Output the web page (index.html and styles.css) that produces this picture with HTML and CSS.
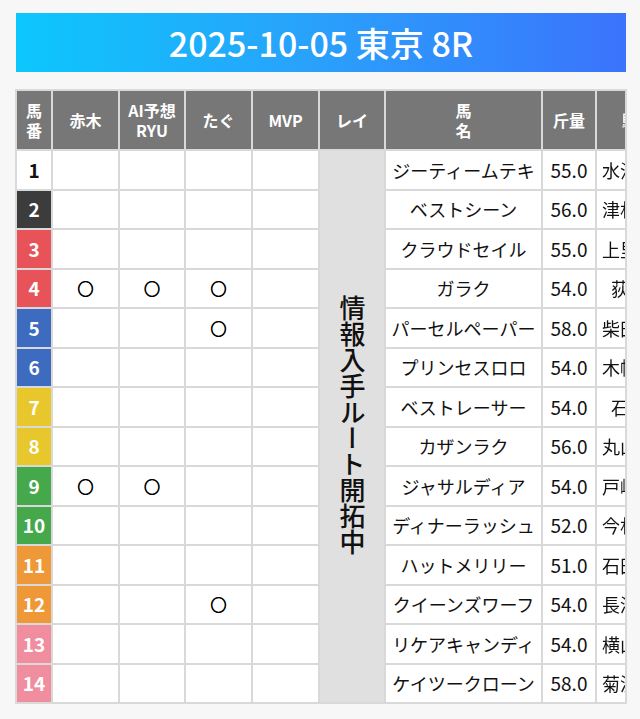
FILE: index.html
```html
<!DOCTYPE html>
<html lang="ja">
<head>
<meta charset="utf-8">
<title>2025-10-05 東京 8R</title>
<link rel="stylesheet" href="styles.css">
</head>
<body>
<main class="page">
  <h1 class="race-title">2025-10-05 東京 8R</h1>
  <div class="table-wrap">
    <table class="race-table">
      <colgroup>
        <col class="c-num"><col class="c-pick"><col class="c-pick2"><col class="c-pick"><col class="c-pick"><col class="c-pick2"><col class="c-name"><col class="c-wt"><col class="c-jockey">
      </colgroup>
      <thead>
        <tr>
          <th>馬<br>番</th>
          <th>赤木</th>
          <th>AI予想<br>RYU</th>
          <th>たぐ</th>
          <th>MVP</th>
          <th>レイ</th>
          <th>馬<br>名</th>
          <th>斤量</th>
          <th class="jk-head"><span class="peek peek-head">騎手</span></th>
        </tr>
      </thead>
      <tbody>
        <tr><td class="num w1">1</td><td></td><td></td><td></td><td></td><td class="rei" rowspan="14"><span class="rei-text">情報入手ルート開拓中</span></td><td class="name">ジーティームテキ</td><td class="wt">55.0</td><td class="jk"><span class="peek">水沼元輝</span></td></tr>
        <tr><td class="num w2">2</td><td></td><td></td><td></td><td></td><td class="name">ベストシーン</td><td class="wt">56.0</td><td class="jk"><span class="peek">津村明秀</span></td></tr>
        <tr><td class="num w3">3</td><td></td><td></td><td></td><td></td><td class="name">クラウドセイル</td><td class="wt">55.0</td><td class="jk"><span class="peek">上里直汰</span></td></tr>
        <tr><td class="num w3">4</td><td class="mk">○</td><td class="mk">○</td><td class="mk">○</td><td></td><td class="name">ガラク</td><td class="wt">54.0</td><td class="jk"><span class="peek">荻野極</span></td></tr>
        <tr><td class="num w5">5</td><td></td><td></td><td class="mk">○</td><td></td><td class="name">パーセルペーパー</td><td class="wt">58.0</td><td class="jk"><span class="peek">柴田大知</span></td></tr>
        <tr><td class="num w5">6</td><td></td><td></td><td></td><td></td><td class="name">プリンセスロロ</td><td class="wt">54.0</td><td class="jk"><span class="peek">木幡初也</span></td></tr>
        <tr><td class="num w7">7</td><td></td><td></td><td></td><td></td><td class="name">ベストレーサー</td><td class="wt">54.0</td><td class="jk"><span class="peek">石橋脩</span></td></tr>
        <tr><td class="num w7">8</td><td></td><td></td><td></td><td></td><td class="name">カザンラク</td><td class="wt">56.0</td><td class="jk"><span class="peek">丸山元気</span></td></tr>
        <tr><td class="num w9">9</td><td class="mk">○</td><td class="mk">○</td><td></td><td></td><td class="name">ジャサルディア</td><td class="wt">54.0</td><td class="jk"><span class="peek">戸崎圭太</span></td></tr>
        <tr><td class="num w9">10</td><td></td><td></td><td></td><td></td><td class="name">ディナーラッシュ</td><td class="wt">52.0</td><td class="jk"><span class="peek">今村聖奈</span></td></tr>
        <tr><td class="num w11">11</td><td></td><td></td><td></td><td></td><td class="name">ハットメリリー</td><td class="wt">51.0</td><td class="jk"><span class="peek">石田拓郎</span></td></tr>
        <tr><td class="num w11">12</td><td></td><td></td><td class="mk">○</td><td></td><td class="name">クイーンズワーフ</td><td class="wt">54.0</td><td class="jk"><span class="peek">長浜鴻緒</span></td></tr>
        <tr><td class="num w13">13</td><td></td><td></td><td></td><td></td><td class="name">リケアキャンディ</td><td class="wt">54.0</td><td class="jk"><span class="peek">横山琉人</span></td></tr>
        <tr><td class="num w13">14</td><td></td><td></td><td></td><td></td><td class="name">ケイツークローン</td><td class="wt">58.0</td><td class="jk"><span class="peek">菊沢一樹</span></td></tr>
      </tbody>
    </table>
  </div>
</main>
</body>
</html>
```

FILE: styles.css
```css
html, body {
  margin: 0;
  padding: 0;
}
body {
  background: #f7f7f7;
  font-family: "Noto Sans CJK JP", "Noto Sans", sans-serif;
  color: #111;
}
.page {
  width: 640px;
  height: 719px;
  box-sizing: border-box;
  padding: 13px 0 0 16px;
  overflow: hidden;
}
.race-title {
  margin: 0;
  width: 610px;
  height: 59px;
  display: flex;
  align-items: center;
  justify-content: center;
  background: linear-gradient(90deg, #0cc7fc 0%, #2aa0fb 50%, #3b73fc 100%);
  color: #fff;
  font-size: 34px;
  font-weight: 500;
  letter-spacing: 0;
}
.table-wrap {
  margin: 17px 0 0 -1px;
  width: 612px;
}
.race-table {
  table-layout: fixed;
  width: 612px;
  border-collapse: separate;
  border-spacing: 2px;
  background: #d9d9d9;
}
.c-num { width: 34px; }
.c-pick { width: 65px; }
.c-pick2 { width: 64px; }
.c-name { width: 155px; }
.c-wt { width: 52px; }
.c-jockey { width: 28px; }

.race-table th {
  background: #777;
  color: #fff;
  font-size: 16px;
  font-weight: 700;
  line-height: 20px;
  height: 58px;
  padding: 0;
  text-align: center;
  vertical-align: middle;
  white-space: nowrap;
}
.race-table td {
  background: #fff;
  height: 37.5px;
  padding: 0;
  text-align: center;
  vertical-align: middle;
  font-size: 18px;
  line-height: 22px;
  white-space: nowrap;
}
.race-table td.num {
  font-weight: 700;
  font-size: 19px;
  color: #fff;
}
.w1 { color: #111 !important; background: #fff !important; }
.w2 { background: #3c3c3c !important; }
.w3 { background: #e8535a !important; }
.w5 { background: #3c6bc0 !important; }
.w7 { background: #e8c72c !important; }
.w9 { background: #45a94b !important; }
.w11 { background: #ef9838 !important; }
.w13 { background: #f08ea0 !important; }

.race-table td.mk {
  font-size: 16px;
  font-weight: 700;
  color: #000;
  -webkit-text-stroke: 0.7px #000;
}
.race-table td.rei {
  background: #e0e0e0;
}
.rei-text {
  display: inline-block;
  writing-mode: vertical-rl;
  text-orientation: upright;
  font-size: 26px;
  line-height: 30px;
  font-weight: 500;
  color: #111;
}
.race-table td.name {
  font-size: 18px;
}
.race-table td.wt {
  font-size: 19px;
}

/* jockey column: the table continues past the panel edge, only the start shows */
.race-table td.jk,
.race-table th.jk-head {
  text-align: left;
}
.peek {
  display: inline-block;
  width: 82px;
  text-align: center;
  font-size: 18px;
  color: transparent;
  background: linear-gradient(90deg, #111 0, #111 28px, transparent 28px);
  -webkit-background-clip: text;
  background-clip: text;
}
.peek-head {
  font-size: 16px;
  background: linear-gradient(90deg, #fff 0, #fff 28px, transparent 28px);
  -webkit-background-clip: text;
  background-clip: text;
}
```
